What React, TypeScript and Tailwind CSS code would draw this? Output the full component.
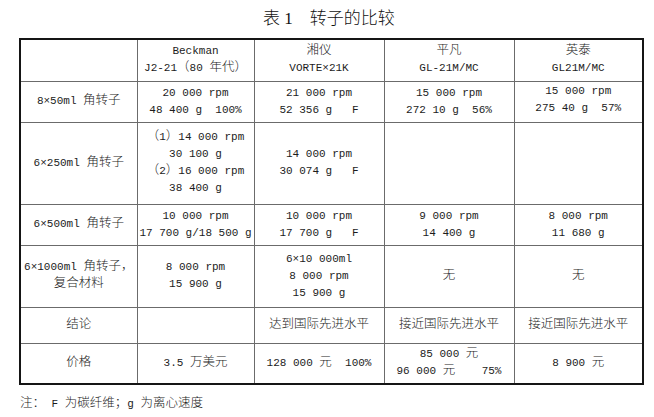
import React from "react"

const CJK = /([\u3000-\u303f\u4e00-\u9fff\uff00-\uffef]+)/

// split a string so CJK runs get a slightly larger size than the mono latin text
function T({ s }: { s: string }) {
  const parts = s.split(CJK)
  return (
    <>
      {parts.map((p, i) =>
        CJK.test(p) ? (
          <span key={i} className="text-[12.5px] font-light">
            {p}
          </span>
        ) : (
          <span key={i} className="whitespace-pre">
            {p}
          </span>
        )
      )}
    </>
  )
}

function Cell({ lines, className = "" }: { lines: string[]; className?: string }) {
  return (
    <td className={`border border-[#6b6b6b] text-center align-middle p-0 leading-[17px] ${className}`}>
      {lines.map((l, i) => (
        <div key={i}>
          <T s={l} />
        </div>
      ))}
    </td>
  )
}

const rows: { h: string; cells: string[][] }[] = [
  {
    h: "h-[41px]",
    cells: [["8×50ml 角转子"], ["20 000 rpm", "48 400 g  100%"], ["21 000 rpm", "52 356 g   F"], ["15 000 rpm", "272 10 g  56%"], ["15 000 rpm", "275 40 g  57%"]],
  },
  {
    h: "h-[82px]",
    cells: [["6×250ml 角转子"], ["（1）14 000 rpm", "30 100 g", "（2）16 000 rpm", "38 400 g"], ["14 000 rpm", "30 074 g   F"], [""], [""]],
  },
  {
    h: "h-[41px]",
    cells: [["6×500ml 角转子"], ["10 000 rpm", "17 700 g/18 500 g"], ["10 000 rpm", "17 700 g   F"], ["9 000 rpm", "14 400 g"], ["8 000 rpm", "11 680 g"]],
  },
  {
    h: "h-[62px]",
    cells: [["6×1000ml 角转子，", "复合材料"], ["8 000 rpm", "15 900 g"], ["6×10 000ml", "8 000 rpm", "15 900 g"], ["无"], ["无"]],
  },
  {
    h: "h-[36px]",
    cells: [["结论"], [""], ["达到国际先进水平"], ["接近国际先进水平"], ["接近国际先进水平"]],
  },
  {
    h: "h-[41px]",
    cells: [["价格"], ["3.5 万美元"], ["128 000 元  100%"], ["85 000 元", "96 000 元    75%"], ["8 900 元"]],
  },
]

export default function App() {
  return (
    <div className="w-[654px] h-[417px] bg-white text-[#1c1c1c] font-['Liberation_Mono','Noto_Sans_CJK_SC',monospace] text-[11px]">
      <div className="pt-[8px] pl-[263px] leading-[22px] text-[17px] font-light font-['Liberation_Serif','Noto_Sans_CJK_SC',serif] text-[#111]">
        表 1<span className="inline-block w-[17px]" />转子的比较
      </div>
      <table className="ml-[19px] mt-[8px] w-[623px] table-fixed border-collapse border-2 border-[#151515]">
        <colgroup>
          <col className="w-[117px]" />
          <col className="w-[117px]" />
          <col className="w-[130px]" />
          <col className="w-[130px]" />
          <col className="w-[129px]" />
        </colgroup>
        <tbody>
          <tr className="h-[42px]">
            <Cell lines={[""]} />
            <Cell lines={["Beckman", "J2-21（80 年代）"]} />
            <Cell lines={["湘仪", "VORTE×21K"]} />
            <Cell lines={["平凡", "GL-21M/MC"]} />
            <Cell lines={["英泰", "GL21M/MC"]} />
          </tr>
          {rows.map((r, i) => (
            <tr key={i} className={r.h}>
              {r.cells.map((c, j) => (
                <Cell key={j} lines={c} className={i === 0 && j === 4 ? "align-top pt-[1px]" : ""} />
              ))}
            </tr>
          ))}
        </tbody>
      </table>
      <div className="ml-[20px] mt-[11px] leading-[16px]">
        <T s="注： F 为碳纤维；g 为离心速度" />
      </div>
    </div>
  )
}
